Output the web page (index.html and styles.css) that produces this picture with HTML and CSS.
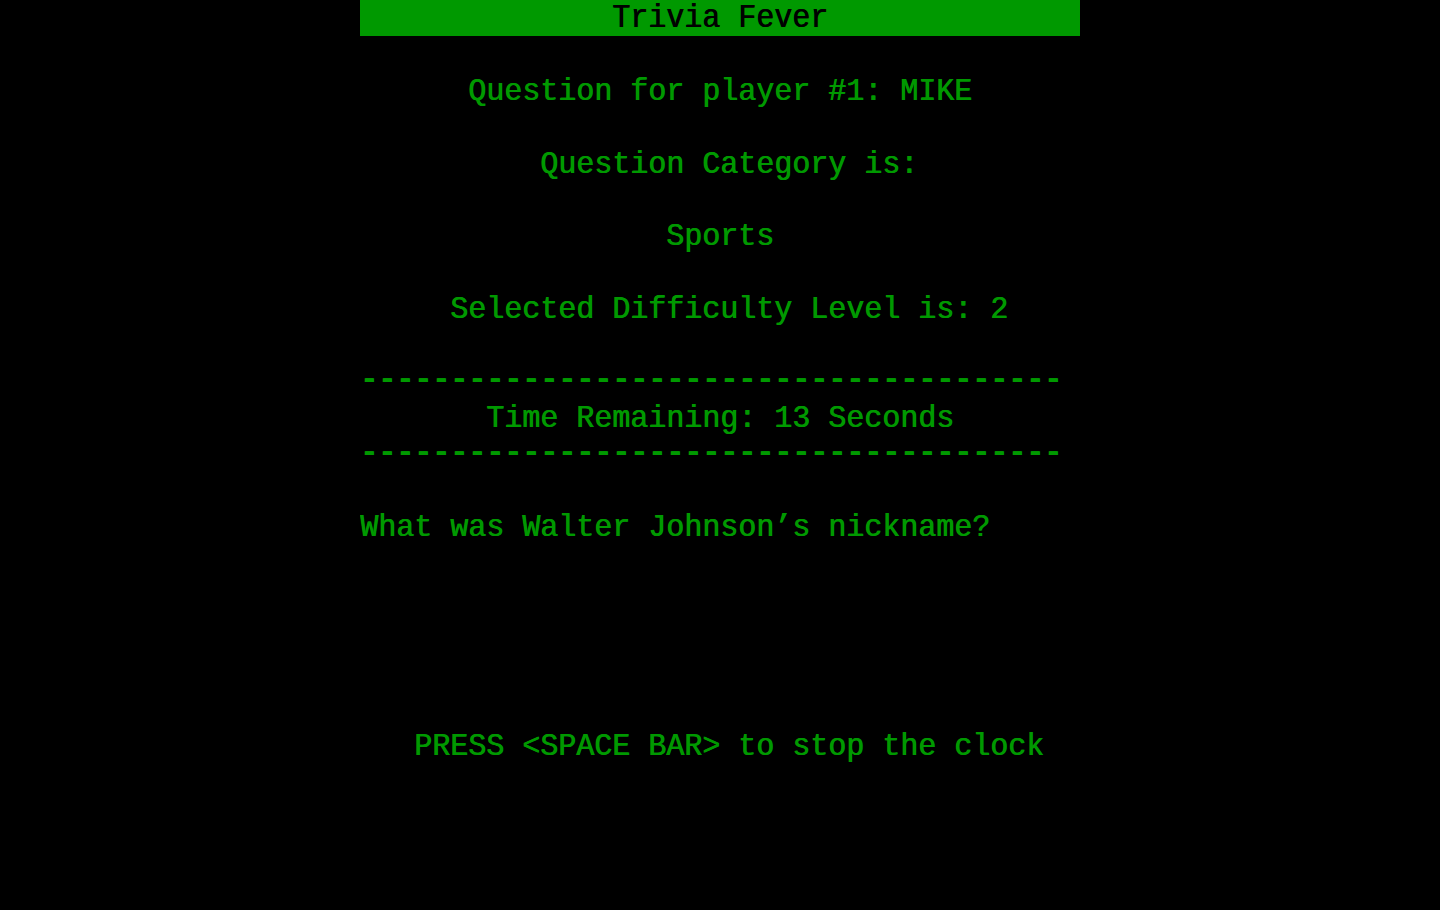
FILE: index.html
```html
<!DOCTYPE html>
<html lang="en">
  <head>
    <meta charset="UTF-8" />
    <meta name="viewport" content="width=device-width, initial-scale=1.0" />
    <title>Trivia Fever</title>
    <link rel="stylesheet" href="styles.css">
  </head>
  <body>
    <div class="screen">
      <div class="titlebar"><span class="title">Trivia Fever</span></div>
      <div class="lines">
        <div class="row"></div>
        <div class="row">      Question for player #1: MIKE</div>
        <div class="row"></div>
        <div class="row">          Question Category is:</div>
        <div class="row"></div>
        <div class="row">                 Sports</div>
        <div class="row"></div>
        <div class="row">     Selected Difficulty Level is: 2</div>
        <div class="row"></div>
        <div class="row rule">---------------------------------------</div>
        <div class="row">       Time Remaining: 13 Seconds</div>
        <div class="row rule">---------------------------------------</div>
        <div class="row"></div>
        <div class="row">What was Walter Johnson’s nickname?</div>
        <div class="row"></div>
        <div class="row"></div>
        <div class="row"></div>
        <div class="row"></div>
        <div class="row"></div>
        <div class="row">   PRESS &lt;SPACE BAR&gt; to stop the clock</div>
      </div>
    </div>
  </body>
</html>
```
FILE: styles.css
```css
html,
body {
  margin: 0;
  background-color: #000;
  height: 100%;
}
.screen {
  width: 720px;
  margin: 0 auto;
  color: #009900;
  font-family: "Liberation Mono", "DejaVu Sans Mono", monospace;
  font-size: 30px;
}
.titlebar {
  background-color: #009900;
  color: #000;
  text-align: center;
  height: 36px;
  line-height: 36px;
  overflow: hidden;
}
.title {
  display: inline-block;
  transform: scaleY(1.08);
  text-shadow: 0.7px 0 0 currentColor;
}
.lines {
  padding-top: 0.4px;
}
.row {
  height: 36.4px;
  line-height: 36.4px;
  white-space: pre;
  transform: scaleY(1.07);
  text-shadow: 0.7px 0 0 currentColor;
}
.rule {
  font-weight: bold;
  line-height: 32px;
}
```
